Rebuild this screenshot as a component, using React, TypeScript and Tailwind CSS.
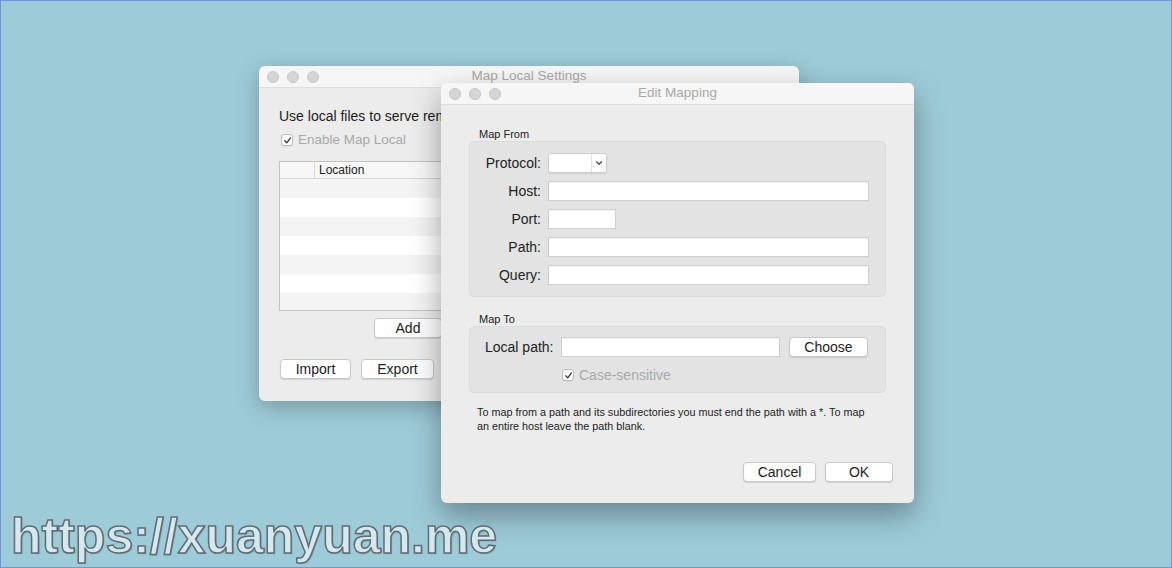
import React from 'react';

const font = { fontFamily: '"Liberation Sans", Arial, sans-serif' };

const TrafficLights = () => (
  <div className="flex items-center gap-2 pl-2">
    <span className="w-3 h-3 rounded-full bg-[#d5d5d5] border border-[#c8c8c8]" />
    <span className="w-3 h-3 rounded-full bg-[#d5d5d5] border border-[#c8c8c8]" />
    <span className="w-3 h-3 rounded-full bg-[#d5d5d5] border border-[#c8c8c8]" />
  </div>
);

const TitleBar = ({ title }: { title: string }) => (
  <div className="relative h-[22px] bg-[#f6f6f6] border-b border-[#dedede] rounded-t-[6px] flex items-center">
    <TrafficLights />
    <div className="absolute inset-0 flex items-center justify-center text-[13.5px] text-[#a9a9a9] pointer-events-none">
      {title}
    </div>
  </div>
);

const Checkbox = () => (
  <span className="w-3 h-3 rounded-[3px] bg-white border border-[#bdbdbd] flex items-center justify-center shadow-[0_0.5px_0.5px_rgba(0,0,0,0.1)]">
    <svg width="9" height="9" viewBox="0 0 10 10" fill="none">
      <path d="M2 5.3 L4.2 7.6 L8.2 2" stroke="#333" strokeWidth="1.4" strokeLinecap="round" strokeLinejoin="round" />
    </svg>
  </span>
);

const Button = ({ label, className = '' }: { label: string; className?: string }) => (
  <div className={`h-5 rounded-[4px] bg-white border border-[#c9c9c9] shadow-[0_1px_1px_rgba(0,0,0,0.12)] flex items-center justify-center text-[14px] text-[#222] ${className}`}>
    {label}
  </div>
);

const Input = ({ className = '' }: { className?: string }) => (
  <div className={`h-5 bg-white border border-[#cfcfcf] shadow-[inset_0_1px_0_rgba(0,0,0,0.04)] ${className}`} />
);

const Field = ({ label, children }: { label: string; children: React.ReactNode }) => (
  <div className="flex items-center gap-[7px] h-5">
    <div className="w-[56px] text-right text-[14px] text-[#222] whitespace-nowrap">{label}</div>
    {children}
  </div>
);

export default function App() {
  return (
    <div style={font} className="relative w-[1172px] h-[568px] overflow-hidden bg-[#9dcbd8] border border-[#6f96dc]">
      {/* Map Local Settings window (behind) */}
      <div className="absolute left-[258px] top-[65px] w-[540px] h-[335px] rounded-[6px] bg-[#ececec] shadow-[0_6px_22px_rgba(0,0,0,0.25)] overflow-hidden">
        <TitleBar title="Map Local Settings" />
        <div className="px-5 pt-[19px]">
          <div className="text-[14px] leading-[18px] text-[#1d1d1d] whitespace-nowrap">
            Use local files to serve rem
          </div>
          <div className="mt-[6px] h-[18px] ml-[2px] flex items-center gap-[5px]">
            <Checkbox />
            <span className="text-[13.5px] text-[#a9a9a9]">Enable Map Local</span>
          </div>
          <div className="mt-[12px] h-[150px] border border-[#c3c3c3] bg-white flex flex-col">
            <div className="h-[17px] flex items-stretch bg-[#f7f7f7] border-b border-[#d6d6d6] text-[12px] text-[#222]">
              <div className="w-[35px] border-r border-[#d6d6d6]" />
              <div className="pl-[4px] flex items-center">Location</div>
            </div>
            <div className="h-[19px] bg-[#f4f4f4]" />
            <div className="h-[19px] bg-white" />
            <div className="h-[19px] bg-[#f4f4f4]" />
            <div className="h-[19px] bg-white" />
            <div className="h-[19px] bg-[#f4f4f4]" />
            <div className="h-[19px] bg-white" />
            <div className="flex-1 bg-[#f4f4f4]" />
          </div>
          <div className="mt-[7px] flex gap-2 ml-[95px]">
            <Button label="Add" className="w-[68px]" />
          </div>
          <div className="mt-[21px] flex gap-[10px] ml-[1px]">
            <Button label="Import" className="w-[71px]" />
            <Button label="Export" className="w-[73px]" />
          </div>
        </div>
      </div>

      {/* Edit Mapping window (front) */}
      <div className="absolute left-[440px] top-[82px] w-[473px] h-[420px] rounded-[6px] bg-[#ececec] shadow-[0_12px_30px_rgba(0,0,0,0.35)]">
        <TitleBar title="Edit Mapping" />
        <div className="px-[28px] pt-[22px]">
          <div className="ml-[10px] text-[11px] leading-[14px] text-[#222]">Map From</div>
          <div className="h-[156px] rounded-[5px] bg-[#e3e3e3] border border-[#dcdcdc] pl-[15px] pr-[16px] pt-[11px] flex flex-col gap-2">
            <Field label="Protocol:">
              <div className="h-5 w-[59px] bg-white border border-[#cfcfcf] rounded-[3px] flex shadow-[0_1px_1px_rgba(0,0,0,0.08)]">
                <div className="flex-1" />
                <div className="w-[15px] border-l border-[#e2e2e2] flex items-center justify-center">
                  <svg width="8" height="6" viewBox="0 0 8 6" fill="none">
                    <path d="M1.5 1.8 L4 4.2 L6.5 1.8" stroke="#444" strokeWidth="1.2" strokeLinecap="round" strokeLinejoin="round" />
                  </svg>
                </div>
              </div>
            </Field>
            <Field label="Host:">
              <Input className="flex-1" />
            </Field>
            <Field label="Port:">
              <Input className="w-[68px]" />
            </Field>
            <Field label="Path:">
              <Input className="flex-1" />
            </Field>
            <Field label="Query:">
              <Input className="flex-1" />
            </Field>
          </div>

          <div className="mt-[15px] ml-[10px] text-[11px] leading-[14px] text-[#222]">Map To</div>
          <div className="h-[67px] rounded-[5px] bg-[#e3e3e3] border border-[#dcdcdc] pl-[15px] pr-[16px] pt-[10px]">
            <div className="flex items-center h-5">
              <div className="w-[68px] text-[14px] text-[#222] whitespace-nowrap">Local path:</div>
              <Input className="ml-[8px] w-[219px]" />
              <Button label="Choose" className="ml-[9px] w-[79px]" />
            </div>
            <div className="mt-[9px] h-[18px] ml-[77px] flex items-center gap-[5px]">
              <Checkbox />
              <span className="text-[14px] text-[#a9a9a9]">Case-sensitive</span>
            </div>
          </div>

          <div className="mt-[12px] ml-[8px] text-[10.8px] leading-[14px] text-[#222] whitespace-nowrap">
            To map from a path and its subdirectories you must end the path with a *. To map
            <br />
            an entire host leave the path blank.
          </div>

          <div className="mt-[29px] -mr-[7px] flex justify-end gap-[9px]">
            <Button label="Cancel" className="w-[73px]" />
            <Button label="OK" className="w-[68px]" />
          </div>
        </div>
      </div>

      {/* watermark */}
      <div className="absolute left-[10px] top-[510px] text-[50px] leading-none font-bold text-[#d6e8ee] [-webkit-text-stroke:1.5px_#5e6e74] [text-shadow:1px_1px_1px_rgba(0,0,0,0.25)] whitespace-nowrap">
        https://xuanyuan.me
      </div>
    </div>
  );
}
